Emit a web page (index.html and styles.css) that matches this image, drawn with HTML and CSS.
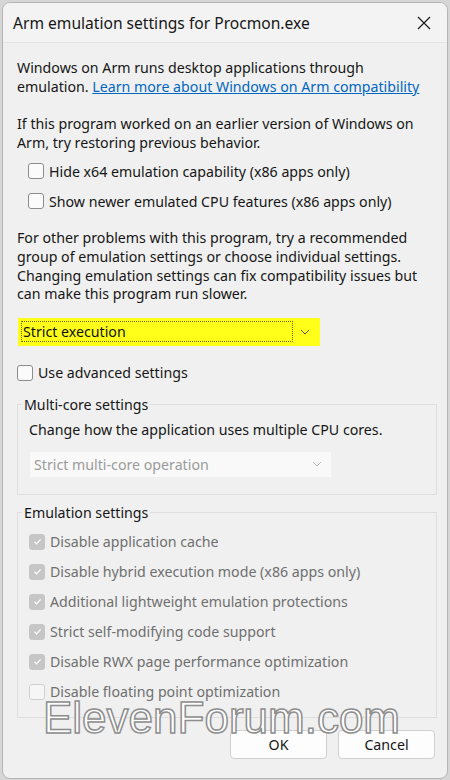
FILE: index.html
```html
<!DOCTYPE html>
<html>
<head>
<meta charset="utf-8">
<link rel="stylesheet" href="styles.css">
</head>
<body>
<div class="window">
  <div class="titlebar">
    <span class="title">Arm emulation settings for Procmon.exe</span>
    <svg class="close" width="16" height="16" viewBox="0 0 16 16"><path d="M2 2 L14 14 M14 2 L2 14" stroke="#1a1a1a" stroke-width="1.2" fill="none"/></svg>
  </div>
  <div class="content">
    <p class="para p1">Windows on Arm runs desktop applications through emulation. <a class="link">Learn more about Windows on Arm compatibility</a></p>
    <p class="para p2">If this program worked on an earlier version of Windows on Arm, try restoring previous behavior.</p>
    <div class="rows indent">
      <div class="row"><span class="box"></span><span>Hide x64 emulation capability (x86 apps only)</span></div>
      <div class="row"><span class="box"></span><span>Show newer emulated CPU features (x86 apps only)</span></div>
    </div>
    <p class="para p3">For other problems with this program, try a recommended group of emulation settings or choose individual settings. Changing emulation settings can fix compatibility issues but can make this program run slower.</p>
    <div class="select active">
      <span class="focus">Strict execution</span>
      <svg class="chev" width="12" height="8" viewBox="0 0 12 8"><path d="M2 2 L6 6 L10 2" stroke="#555" stroke-width="1" fill="none"/></svg>
    </div>
    <div class="row adv"><span class="box"></span><span>Use advanced settings</span></div>
    <fieldset class="group g1">
      <legend>Multi-core settings</legend>
      <div class="desc">Change how the application uses multiple CPU cores.</div>
      <div class="select disabled">
        <span>Strict multi-core operation</span>
        <svg class="chev" width="12" height="8" viewBox="0 0 12 8"><path d="M2 2 L6 6 L10 2" stroke="#bbb" stroke-width="1" fill="none"/></svg>
      </div>
    </fieldset>
    <fieldset class="group g2">
      <legend>Emulation settings</legend>
      <div class="rows">
        <div class="row dis"><span class="box checked"><svg width="11" height="11" viewBox="0 0 11 11"><path d="M2.5 5.8 L4.6 7.8 L8.6 3.4" stroke="#fff" stroke-width="1.2" fill="none"/></svg></span><span>Disable application cache</span></div>
        <div class="row dis"><span class="box checked"><svg width="11" height="11" viewBox="0 0 11 11"><path d="M2.5 5.8 L4.6 7.8 L8.6 3.4" stroke="#fff" stroke-width="1.2" fill="none"/></svg></span><span>Disable hybrid execution mode (x86 apps only)</span></div>
        <div class="row dis"><span class="box checked"><svg width="11" height="11" viewBox="0 0 11 11"><path d="M2.5 5.8 L4.6 7.8 L8.6 3.4" stroke="#fff" stroke-width="1.2" fill="none"/></svg></span><span>Additional lightweight emulation protections</span></div>
        <div class="row dis"><span class="box checked"><svg width="11" height="11" viewBox="0 0 11 11"><path d="M2.5 5.8 L4.6 7.8 L8.6 3.4" stroke="#fff" stroke-width="1.2" fill="none"/></svg></span><span>Strict self-modifying code support</span></div>
        <div class="row dis"><span class="box checked"><svg width="11" height="11" viewBox="0 0 11 11"><path d="M2.5 5.8 L4.6 7.8 L8.6 3.4" stroke="#fff" stroke-width="1.2" fill="none"/></svg></span><span>Disable RWX page performance optimization</span></div>
        <div class="row dis"><span class="box unchecked"></span><span>Disable floating point optimization</span></div>
      </div>
    </fieldset>
    <div class="buttons">
      <button class="btn">OK</button>
      <button class="btn">Cancel</button>
    </div>
  </div>
  <div class="watermark">ElevenForum.com</div>
</div>
</body>
</html>
```
FILE: styles.css
```css
html, body {
  margin: 0;
  padding: 0;
}
body {
  background: #d6d6d6;
  width: 450px;
  height: 780px;
  overflow: hidden;
  font-family: "Noto Sans", "Open Sans", sans-serif;
  font-size: 14.2px;
  color: #161616;
}
.window {
  position: relative;
  margin: 2px 2px 0 2px;
  width: 444px;
  height: 775px;
  border: 1px solid #b5b5b5;
  border-radius: 8px;
  background: #f0f0f0;
  overflow: hidden;
}
.titlebar {
  height: 39px;
  background: #f3f3f3;
  border-bottom: 1px solid #e6e6e6;
  display: flex;
  align-items: center;
  justify-content: space-between;
  padding: 0 15px 0 10px;
}
.title {
  font-size: 15.6px;
  color: #161616;
}
.close {
  display: block;
}
.content {
  padding: 16px 12px 0 14px;
}
.para {
  margin: 0;
  line-height: 18.6px;
}
.p2 { margin-top: 19px; }
.p3 { margin-top: 13px; }
.link {
  color: #0067c0;
  text-decoration: underline;
}
.rows.indent {
  margin-top: 4px;
  padding-left: 11px;
}
.row {
  height: 30px;
  display: flex;
  align-items: center;
  gap: 5px;
}
.box {
  width: 14px;
  height: 14px;
  border: 1px solid #8c8c8c;
  border-radius: 3px;
  background: #fbfbfb;
  flex: none;
  display: flex;
  align-items: center;
  justify-content: center;
}
.box.checked {
  background: #c6c6c6;
  border-color: #c6c6c6;
}
.box.unchecked {
  border-color: #cfcfcf;
  background: #f6f6f6;
}
.row.dis {
  color: #6f6f6f;
}
.select {
  display: flex;
  align-items: center;
  justify-content: space-between;
  box-sizing: border-box;
}
.select.active {
  margin-top: 14px;
  width: 302px;
  height: 28px;
  margin-left: 1px;
  background: #ffff1a;
  padding: 0 9px 0 3px;
}
.focus {
  box-sizing: border-box;
  width: 272px;
  height: 21px;
  border: 1px dotted #6a6a00;
  line-height: 19px;
  padding-left: 1px;
  color: #111;
}
.adv {
  margin-top: 12px;
  margin-left: 0;
}
.group {
  margin: 0;
  border: 1px solid #dedede;
  padding: 0 10px 0 11px;
  width: 397px;
  margin-left: 0;
}
.group legend {
  padding: 0 2px;
  margin-left: -7px;
  line-height: 18px;
}
.g1 {
  margin-top: 8px;
  padding-bottom: 17px;
}
.desc {
  margin-top: 7px;
  line-height: 18px;
}
.select.disabled {
  margin-top: 13px;
  margin-left: 1px;
  width: 301px;
  height: 25px;
  background: #f9f9f9;
  color: #9b9b9b;
  padding: 0 8px 0 4px;
}
.g2 {
  margin-top: 9px;
  padding-bottom: 10px;
}
.g2 .rows {
  margin-top: 5px;
}
.buttons {
  margin-top: 12px;
  display: flex;
  justify-content: flex-end;
  gap: 11px;
  padding-right: 0;
}
.btn {
  width: 97px;
  height: 29px;
  border: 1px solid #d0d0d0;
  border-radius: 4px;
  background: #fdfdfd;
  font-family: "Noto Sans", "Open Sans", sans-serif;
  font-size: 14.2px;
  color: #161616;
  padding: 0;
}
.watermark {
  position: absolute;
  left: 40px;
  top: 690px;
  font-family: "Liberation Sans", Arial, sans-serif;
  font-size: 44px;
  color: #ffffff;
  -webkit-text-stroke: 1.5px #8e8e8e;
  letter-spacing: 0;
  line-height: 50px;
}
```
